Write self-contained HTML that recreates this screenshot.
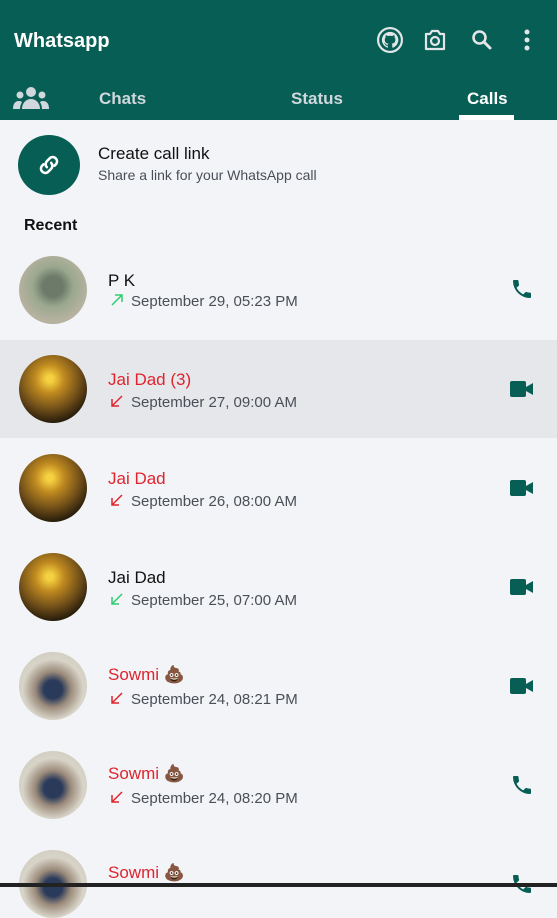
<!DOCTYPE html>
<html><head><meta charset="utf-8"><style>
*{margin:0;padding:0;box-sizing:border-box}
body{width:557px;height:887px;overflow:hidden;background:#f2f4f7;font-family:"Liberation Sans","Noto Sans CJK SC",sans-serif;position:relative}
.hdr{position:absolute;left:0;top:0;width:557px;height:120px;background:#075e54;color:#fff}
.title{position:absolute;left:14px;top:30px;font-size:20px;font-weight:bold}
.tab{position:absolute;top:89px;font-size:17px;font-weight:bold;color:#d0d7dd}
.ul{position:absolute;left:459px;top:115px;width:55px;height:5px;background:#fff}
.ic{position:absolute}
.row{position:absolute;left:0;width:557px;height:98px}
.av{position:absolute;left:19px;width:68px;height:68px;border-radius:50%}
.nm{position:absolute;left:108px;font-size:17px;color:#111}
.red{color:#e0242e}
.dt{position:absolute;left:131px;font-size:15px;color:#4a4f57}
.ar{position:absolute;left:110px}
.ri{position:absolute;left:510px}
</style></head><body>
<div class="hdr">
<div class="title">Whatsapp</div>
<svg class="ic" style="left:377px;top:27px" width="26" height="26" viewBox="0 0 24 24"><circle cx="12" cy="12" r="11" fill="none" stroke="#e3e6e8" stroke-width="2"/><path d="M12 4.5a7.5 7.5 0 0 0-2.4 14.6c.4 0 .5-.2.5-.4v-1.4c-2 .4-2.5-.9-2.5-.9-.3-.8-.8-1-.8-1-.7-.5 0-.5 0-.5.7 0 1.1.8 1.1.8.7 1.1 1.8.8 2.2.6.1-.5.3-.8.5-1-1.7-.2-3.4-.8-3.4-3.7 0-.8.3-1.5.8-2-.1-.2-.3-1 .1-2 0 0 .6-.2 2.1.8a7 7 0 0 1 3.8 0c1.4-1 2.1-.8 2.1-.8.4 1 .1 1.8.1 2 .5.5.8 1.2.8 2 0 2.9-1.8 3.5-3.4 3.7.3.2.5.7.5 1.4v2c0 .2.1.5.5.4A7.5 7.5 0 0 0 12 4.5z" fill="#e3e6e8"/></svg>
<svg class="ic" style="left:423px;top:29px" width="24" height="22" viewBox="0 0 24 22"><path d="M3 5h4l2-3h6l2 3h4v15H3z" fill="none" stroke="#e3e6e8" stroke-width="2.2" stroke-linejoin="round"/><circle cx="12" cy="12" r="4" fill="none" stroke="#e3e6e8" stroke-width="2.2"/></svg>
<svg class="ic" style="left:470px;top:28px" width="24" height="24" viewBox="0 0 24 24"><circle cx="9.5" cy="9.5" r="6" fill="none" stroke="#e3e6e8" stroke-width="2.6"/><path d="M14 14l6 6" stroke="#e3e6e8" stroke-width="3" stroke-linecap="round"/></svg>
<svg class="ic" style="left:522px;top:28px" width="10" height="24"><circle cx="5" cy="4" r="2.5" fill="#e3e6e8"/><circle cx="5" cy="12" r="2.5" fill="#e3e6e8"/><circle cx="5" cy="20" r="2.5" fill="#e3e6e8"/></svg>
<svg class="ic" style="left:13px;top:86px" width="36" height="24" viewBox="0 0 36 24"><circle cx="18" cy="6" r="5" fill="#d0d7dd"/><circle cx="7" cy="9" r="3.5" fill="#d0d7dd"/><circle cx="29" cy="9" r="3.5" fill="#d0d7dd"/><path d="M9 23c0-6 4-10 9-10s9 4 9 10z" fill="#d0d7dd"/><path d="M0 23c0-5 2-8 6-8 2 0 3 1 3 1-1 2-2 4-2 7z" fill="#d0d7dd"/><path d="M36 23c0-5-2-8-6-8-2 0-3 1-3 1 1 2 2 4 2 7z" fill="#d0d7dd"/></svg>
<div class="tab" style="left:99px">Chats</div>
<div class="tab" style="left:291px">Status</div>
<div class="tab" style="left:467px;color:#fff">Calls</div>
<div class="ul"></div>
</div>
<div style="position:absolute;left:18px;top:135px;width:62px;height:60px;border-radius:50%;background:#075e54"></div>
<svg class="ic" style="left:36px;top:152px" width="26" height="26" viewBox="0 0 24 24"><path d="M10 14a4 4 0 0 1 0-5.5l3-3a4 4 0 0 1 5.6 5.6l-1.5 1.5M14 10a4 4 0 0 1 0 5.5l-3 3a4 4 0 0 1-5.6-5.6l1.5-1.5" fill="none" stroke="#fff" stroke-width="2.4" stroke-linecap="round"/></svg>
<div style="position:absolute;left:98px;top:144px;font-size:17px;color:#111">Create call link</div>
<div style="position:absolute;left:98px;top:167px;font-size:14px;color:#4a4f57">Share a link for your WhatsApp call</div>
<div style="position:absolute;left:24px;top:217px;font-size:16px;font-weight:bold;color:#111">Recent</div>

<div class="row" style="top:340px;background:#e6e7eb"></div>

<!-- rows -->
<div class="av" style="top:256px;background:radial-gradient(circle at 50% 45%,#6d7a6a 0 20%,#9aa88e 40%,#b8b2a0 70%,#8f8a80)"></div>
<div class="nm" style="top:271px">P K</div>
<svg class="ar" style="top:293px" width="14" height="14"><path d="M2 12L12 2M5 2h7v7" fill="none" stroke="#2ecc71" stroke-width="1.5"/></svg>
<div class="dt" style="top:293px">September 29, 05:23 PM</div>
<svg class="ri" style="top:277px" width="24" height="24" viewBox="0 0 24 24"><path d="M6.6 10.8a15 15 0 0 0 6.6 6.6l2.2-2.2c.3-.3.7-.4 1-.2 1.1.4 2.3.6 3.6.6.6 0 1 .4 1 1V20c0 .6-.4 1-1 1A17 17 0 0 1 3 4c0-.6.4-1 1-1h3.5c.6 0 1 .4 1 1 0 1.3.2 2.5.6 3.6.1.3 0 .7-.2 1z" fill="#075e54"/></svg>

<div class="av" style="top:355px;background:radial-gradient(circle at 45% 35%,#f5d040 0 6%,#c08a20 25%,#6a4a18 55%,#1a1408 80%)"></div>
<div class="nm red" style="top:370px">Jai Dad (3)</div>
<svg class="ar" style="top:394px" width="14" height="14"><path d="M12 2L2 12M2 5v7h7" fill="none" stroke="#e0242e" stroke-width="1.5"/></svg>
<div class="dt" style="top:394px">September 27, 09:00 AM</div>
<svg class="ri" style="top:378px" width="24" height="22" viewBox="0 0 24 22"><rect x="0" y="3" width="16" height="16" rx="2" fill="#075e54"/><path d="M16 9l7-4v12l-7-4z" fill="#075e54"/></svg>

<div class="av" style="top:454px;background:radial-gradient(circle at 45% 35%,#f5d040 0 6%,#c08a20 25%,#6a4a18 55%,#1a1408 80%)"></div>
<div class="nm red" style="top:469px">Jai Dad</div>
<svg class="ar" style="top:493px" width="14" height="14"><path d="M12 2L2 12M2 5v7h7" fill="none" stroke="#e0242e" stroke-width="1.5"/></svg>
<div class="dt" style="top:493px">September 26, 08:00 AM</div>
<svg class="ri" style="top:477px" width="24" height="22" viewBox="0 0 24 22"><rect x="0" y="3" width="16" height="16" rx="2" fill="#075e54"/><path d="M16 9l7-4v12l-7-4z" fill="#075e54"/></svg>

<div class="av" style="top:553px;background:radial-gradient(circle at 45% 35%,#f5d040 0 6%,#c08a20 25%,#6a4a18 55%,#1a1408 80%)"></div>
<div class="nm" style="top:568px">Jai Dad</div>
<svg class="ar" style="top:592px" width="14" height="14"><path d="M12 2L2 12M2 5v7h7" fill="none" stroke="#2ecc71" stroke-width="1.5"/></svg>
<div class="dt" style="top:592px">September 25, 07:00 AM</div>
<svg class="ri" style="top:576px" width="24" height="22" viewBox="0 0 24 22"><rect x="0" y="3" width="16" height="16" rx="2" fill="#075e54"/><path d="M16 9l7-4v12l-7-4z" fill="#075e54"/></svg>

<div class="av" style="top:652px;background:radial-gradient(circle at 50% 55%,#2a3a5a 0 18%,#9a8a7a 35%,#d8d4c8 60%,#c8c4b8)"></div>
<div class="nm red" style="top:665px">Sowmi 💩</div>
<svg class="ar" style="top:691px" width="14" height="14"><path d="M12 2L2 12M2 5v7h7" fill="none" stroke="#e0242e" stroke-width="1.5"/></svg>
<div class="dt" style="top:691px">September 24, 08:21 PM</div>
<svg class="ri" style="top:675px" width="24" height="22" viewBox="0 0 24 22"><rect x="0" y="3" width="16" height="16" rx="2" fill="#075e54"/><path d="M16 9l7-4v12l-7-4z" fill="#075e54"/></svg>

<div class="av" style="top:751px;background:radial-gradient(circle at 50% 55%,#2a3a5a 0 18%,#9a8a7a 35%,#d8d4c8 60%,#c8c4b8)"></div>
<div class="nm red" style="top:764px">Sowmi 💩</div>
<svg class="ar" style="top:790px" width="14" height="14"><path d="M12 2L2 12M2 5v7h7" fill="none" stroke="#e0242e" stroke-width="1.5"/></svg>
<div class="dt" style="top:790px">September 24, 08:20 PM</div>
<svg class="ri" style="top:773px" width="24" height="24" viewBox="0 0 24 24"><path d="M6.6 10.8a15 15 0 0 0 6.6 6.6l2.2-2.2c.3-.3.7-.4 1-.2 1.1.4 2.3.6 3.6.6.6 0 1 .4 1 1V20c0 .6-.4 1-1 1A17 17 0 0 1 3 4c0-.6.4-1 1-1h3.5c.6 0 1 .4 1 1 0 1.3.2 2.5.6 3.6.1.3 0 .7-.2 1z" fill="#075e54"/></svg>

<div class="av" style="top:850px;background:radial-gradient(circle at 50% 55%,#2a3a5a 0 18%,#9a8a7a 35%,#d8d4c8 60%,#c8c4b8)"></div>
<div class="nm red" style="top:863px">Sowmi 💩</div>
<svg class="ri" style="top:872px" width="24" height="24" viewBox="0 0 24 24"><path d="M6.6 10.8a15 15 0 0 0 6.6 6.6l2.2-2.2c.3-.3.7-.4 1-.2 1.1.4 2.3.6 3.6.6.6 0 1 .4 1 1V20c0 .6-.4 1-1 1A17 17 0 0 1 3 4c0-.6.4-1 1-1h3.5c.6 0 1 .4 1 1 0 1.3.2 2.5.6 3.6.1.3 0 .7-.2 1z" fill="#075e54"/></svg>
<div style="position:absolute;left:0;top:883px;width:557px;height:4px;background:#222"></div>
</body></html>
